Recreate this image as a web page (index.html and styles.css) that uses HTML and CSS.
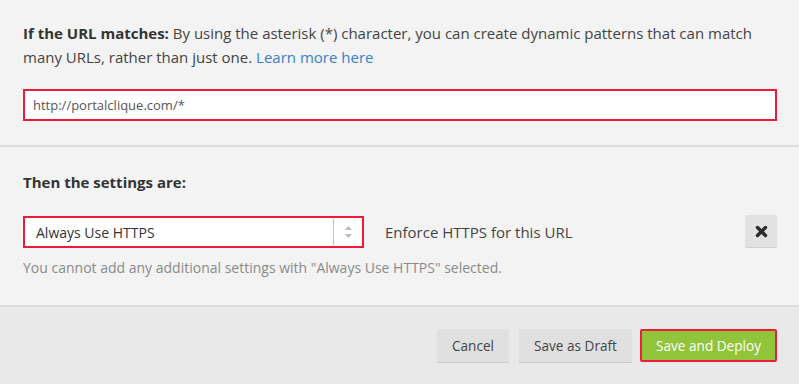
FILE: index.html
```html
<!DOCTYPE html>
<html>
<head>
<meta charset="utf-8">
<link rel="stylesheet" href="styles.css">
</head>
<body>
<div class="page">
  <section class="match">
    <p class="intro"><strong>If the URL matches:</strong> By using the asterisk (*) character, you can create dynamic patterns that can match many URLs, rather than just one. <a href="#" class="link">Learn more here</a></p>
    <div class="url-input">http://portalclique.com/*</div>
  </section>
  <section class="settings">
    <h3 class="settings-title">Then the settings are:</h3>
    <div class="setting-row">
      <div class="select">
        <span class="select-value">Always Use HTTPS</span>
        <span class="select-arrows">
          <svg width="9" height="14" viewBox="0 0 9 14"><path d="M4.5 1 L8 5 H1 Z" fill="#bbb"/><path d="M4.5 13 L8 9 H1 Z" fill="#bbb"/></svg>
        </span>
      </div>
      <span class="setting-desc">Enforce HTTPS for this URL</span>
      <button class="remove">
        <svg width="13" height="13" viewBox="0 0 13 13"><path d="M2.5 2.5 L10.5 10.5 M10.5 2.5 L2.5 10.5" stroke="#2b2b2b" stroke-width="3.4" stroke-linecap="round"/></svg>
      </button>
    </div>
    <p class="help">You cannot add any additional settings with "Always Use HTTPS" selected.</p>
  </section>
  <footer class="actions">
    <button class="btn btn-cancel">Cancel</button>
    <button class="btn btn-draft">Save as Draft</button>
    <button class="btn btn-primary">Save and Deploy</button>
  </footer>
</div>
</body>
</html>
```

FILE: styles.css
```css
* { box-sizing: border-box; }
html, body { margin: 0; padding: 0; }
body {
  font-family: "Open Sans", "Liberation Sans", sans-serif;
  background: #f3f3f3;
  color: #404040;
  width: 799px;
  height: 384px;
  overflow: hidden;
}
.page { display: flex; flex-direction: column; height: 384px; }
.match {
  padding: 21px 22px 24px 23px;
  border-bottom: 2px solid #dedede;
}
.intro {
  margin: 0;
  font-size: 15px;
  line-height: 24px;
  color: #444;
}
.intro strong { color: #333; font-weight: 700; }
.link { color: #3a80c5; text-decoration: none; }
.url-input {
  margin-top: 20px;
  height: 32px;
  border: 2px solid #ee1c38;
  background: #fff;
  font-size: 13px;
  color: #555;
  padding: 0 8px;
  line-height: 28px;
}
.settings {
  padding: 25px 22px 27px 23px;
}
.settings-title {
  margin: 0;
  font-size: 15px;
  line-height: 20px;
  font-weight: 700;
  color: #333;
}
.setting-row {
  display: flex;
  align-items: center;
  margin-top: 24px;
}
.select {
  width: 341px;
  height: 32px;
  border: 2px solid #ee1c38;
  background: #fff;
  display: flex;
  align-items: center;
}
.select-value {
  flex: 1;
  padding-left: 11px;
  font-size: 14px;
  color: #333;
}
.select-arrows {
  width: 29px;
  height: 28px;
  border-left: 1px solid #c4c4c4;
  display: flex;
  align-items: center;
  justify-content: center;
}
.setting-desc {
  margin-left: 21px;
  font-size: 15px;
  color: #444;
  flex: 1;
}
.remove {
  width: 32px;
  height: 32px;
  border: none;
  border-radius: 2px;
  background: #e2e2e2;
  box-shadow: 0 1px 0 #cfcfcf;
  display: flex;
  align-items: center;
  justify-content: center;
  padding: 0;
  margin-top: -2px;
}
.help {
  margin: 10px 0 0;
  font-size: 14px;
  color: #8a8a8a;
  line-height: 20px;
}
.actions {
  flex: 1;
  background: #e9e9e9;
  border-top: 2px solid #dcdcdc;
  display: flex;
  justify-content: flex-end;
  align-items: flex-start;
  padding: 22px 22px 0 0;
}
.btn {
  font-family: "Open Sans", "Liberation Sans", sans-serif;
  font-size: 13.6px;
  height: 33px;
  padding: 0;
  border: none;
  border-radius: 2px;
  background: #e0e0e0;
  color: #444;
  box-shadow: 0 1px 0 #c8c8c8;
  white-space: nowrap;
  cursor: pointer;
}
.btn-cancel { width: 72px; margin-right: 10px; }
.btn-draft { width: 113px; margin-right: 8px; }
.btn-primary {
  width: 137px;
  background: #8fc43b;
  color: #fff;
  border: 2px solid #ee1c38;
  box-shadow: none;
}
```
